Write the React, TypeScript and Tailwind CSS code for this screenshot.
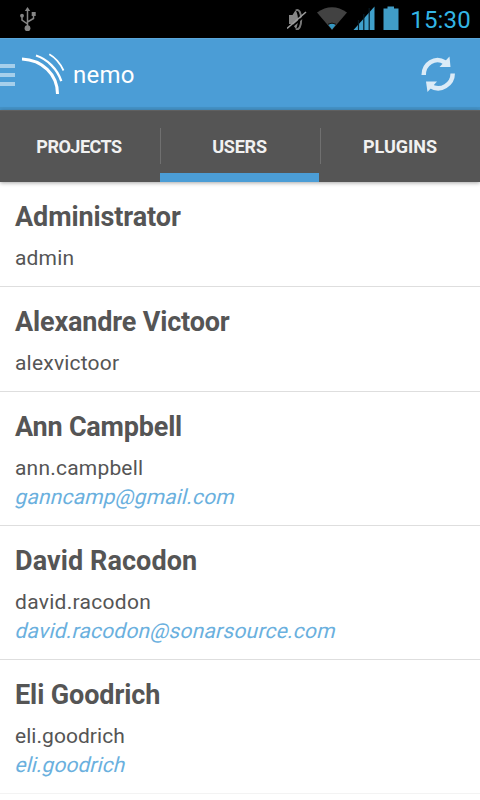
type User = {
  name: string;
  nameTracking?: string;
  login: string;
  loginTracking?: string;
  email?: string;
  emailTracking?: string;
};

const users: User[] = [
  { name: "Administrator", login: "admin", loginTracking: "tracking-[0.15px]" },
  { name: "Alexandre Victoor", nameTracking: "tracking-[-0.16px]", login: "alexvictoor" },
  {
    name: "Ann Campbell",
    nameTracking: "tracking-[-0.2px]",
    login: "ann.campbell",
    email: "ganncamp@gmail.com",
    emailTracking: "tracking-[0.15px]",
  },
  {
    name: "David Racodon",
    nameTracking: "tracking-[0.08px]",
    login: "david.racodon",
    loginTracking: "tracking-[0.3px]",
    email: "david.racodon@sonarsource.com",
  },
  {
    name: "Eli Goodrich",
    login: "eli.goodrich",
    loginTracking: "tracking-[0.05px]",
    email: "eli.goodrich",
    emailTracking: "tracking-[0.05px]",
  },
];

function StatusBar() {
  return (
    <div className="flex h-[38px] shrink-0 items-start bg-black">
      <svg className="ml-[19px] mt-[7px]" width="18" height="25" viewBox="0 0 18 25" fill="none" stroke="#858585" strokeWidth="1.5">
        <path d="M8.5 3V21M8.5 17L3 13V9M8.5 15L14.5 11.5V8" />
        <path d="M8.5 0L11.2 4H5.8Z" fill="#858585" stroke="none" />
        <circle cx="8.5" cy="21.2" r="2.9" fill="#858585" stroke="none" />
        <circle cx="3" cy="8.7" r="1.9" fill="#858585" stroke="none" />
        <path d="M12.7 5H16.7V9H12.7Z" fill="#858585" stroke="none" />
      </svg>
      <div className="ml-auto flex items-start">
        <svg className="mt-[9px]" width="20" height="21" viewBox="0 0 20 21">
          <path d="M2 6H5.5L8.5 1.2C10 3 11 7 11 10.500C11 14 10 18 9 20L5.500 15H2Z" fill="#868686" />
          <path d="M8.800 1.500C12 -.5 14.200 4 14.200 10.500C14.200 17 12 21.500 9 19.800" fill="none" stroke="#777" strokeWidth="2" />
          <path d="M1.200 21L20.200 4.600" stroke="#000" strokeWidth="1.700" />
          <path d="M0 19.500L19 3" stroke="#9b9b9b" strokeWidth="1.600" />
        </svg>
        <svg className="ml-[10px] mt-[7px]" width="30" height="23" viewBox="0 0 30 23">
          <path d="M0 5.5Q15 -5 30 5.500L15 23Z" fill="#424242" />
          <path d="M11.3 17.8Q15 15.5 18.7 17.8L15 22.6Z" fill="#3497c2" />
          <path d="M11 17.2Q15 15 19 17.2" fill="none" stroke="#111" strokeWidth="1" />
        </svg>
        <svg className="ml-[6px] mt-[6px]" width="22" height="24" viewBox="0 0 22 24">
          <path d="M.5 24L21.500 .5V24Z" fill="#3fa0cb" />
          <path d="M5.500 14V24M10.800 8V24M16.200 2V24" stroke="#061a24" strokeWidth="1.200" />
        </svg>
        <svg className="ml-[8px] mt-[6px]" width="16" height="24" viewBox="0 0 16 24" fill="#409dc7">
          <path d="M4.500 .5H11V2.500H15.500V24H.5V2.500H4.500Z" />
        </svg>
        <span className="ml-[11px] mr-[9px] mt-[4px] text-[24px] leading-[32px] tracking-[0.2px] text-[#33b5e5]">15:30</span>
      </div>
    </div>
  );
}

function ActionBar() {
  return (
    <header className="flex h-[72px] shrink-0 items-center border-b-[3px] border-t border-b-[#4593c7] border-t-[#5aa6da] bg-[#4b9dd6] pt-[2px] text-white">
      <div className="mt-[2px] flex w-[15px] flex-col gap-[5px]">
        <i className="h-[4px] bg-[#a6cfeb]" />
        <i className="h-[4px] bg-[#a6cfeb]" />
        <i className="h-[4px] bg-[#a6cfeb]" />
      </div>
      <svg className="ml-[5px]" width="46" height="44" viewBox="20 52 46 44" fill="none" stroke="#fff">
        <path d="M22 59C42 60 57.5 74 57.5 94" strokeWidth="3" />
        <path d="M36 55.5C47 59 57.5 69 61.3 81.2" strokeWidth="2.3" />
        <path d="M49.3 54.3C55 57.5 60 63 63.5 70.5" strokeWidth="1.8" />
      </svg>
      <span className="ml-[7px] mt-[2px] text-[24px] leading-[32px] tracking-[0.2px]">nemo</span>
      <svg className="ml-auto mr-[25px]" width="34" height="36" viewBox="421 56 34 36" fill="none" stroke="#dbebf7" strokeWidth="4.500">
        <path d="M423.700 75C423.700 64 435 56 445 62.500" />
        <path d="M452.700 73.500C452.700 84 441 92.500 430.500 86" />
        <path d="M449.500 56.500L450.500 67H439.500Z" fill="#dbebf7" stroke="none" />
        <path d="M426 81.500H437L427.500 92Z" fill="#dbebf7" stroke="none" />
      </svg>
    </header>
  );
}

function Tabs() {
  return (
    <nav className="z-10 grid h-[72px] shrink-0 grid-cols-3 border-t border-[#606060] bg-[#555] text-center text-[18px] font-bold text-[#f1f1f1] shadow-[0_1px_4px_rgba(0,0,0,0.35)]">
      <div className="pr-[2px] pt-[20px] leading-[32px] tracking-[-0.5px]">PROJECTS</div>
      <div className="mr-px flex flex-col border-b-[9px] border-[#4b9dd6] pt-[17px]">
        <div className="h-[36px] border-l border-[#707070] pr-px pt-[3px] leading-[32px] tracking-[-0.2px]">USERS</div>
      </div>
      <div className="pt-[17px]">
        <div className="h-[36px] border-l border-[#707070] pr-px pt-[3px] leading-[32px]">PLUGINS</div>
      </div>
    </nav>
  );
}

function UserRow({ user }: { user: User }) {
  return (
    <li className="border-b border-[#dedede] px-[15px] pb-[13px] pt-[19px] last:border-[#f3f3f3]">
      <h2 className={`mb-[11px] text-[27px] font-bold leading-[32px] ${user.nameTracking ?? "tracking-[-0.1px]"}`}>
        {user.name}
      </h2>
      <p className={`text-[21px] leading-[29px] ${user.loginTracking ?? "tracking-[0.2px]"}`}>{user.login}</p>
      {user.email && (
        <p
          className={`-ml-px h-[29px] origin-[0_22px] skew-x-[-14deg] text-[21px] leading-[29px] text-[#6ab0de] ${user.emailTracking ?? "tracking-[0.2px]"}`}
        >
          {user.email}
        </p>
      )}
    </li>
  );
}

export default function App() {
  return (
    <div className="flex h-[800px] w-[480px] flex-col overflow-hidden bg-white font-['Roboto',sans-serif] text-[#555]">
      <StatusBar />
      <ActionBar />
      <Tabs />
      <ul>
        {users.map((user) => (
          <UserRow key={user.name} user={user} />
        ))}
      </ul>
    </div>
  );
}
